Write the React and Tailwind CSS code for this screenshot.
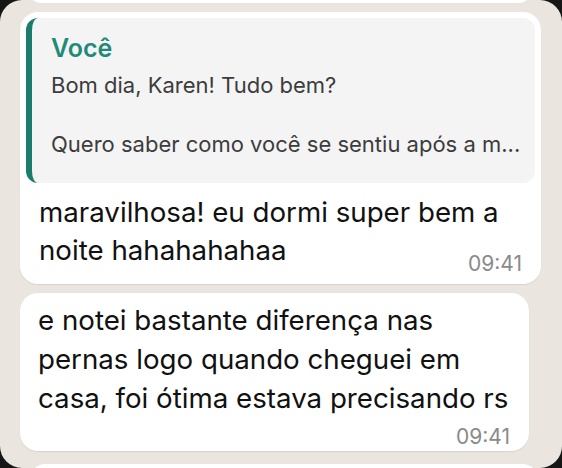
import React from "react";

export default function App() {
  const font = { fontFamily: "Inter, 'Liberation Sans', sans-serif" };
  return (
    <div className="w-[562px] h-[468px] bg-[#161616] overflow-hidden" style={font}>
      <div className="h-full w-full rounded-[22px] bg-[#ebe5df] flex flex-col overflow-hidden">
        {/* previous bubble stub */}
        <div className="-mt-[17px] h-[20px] ml-[30px] w-[500px] rounded-[18px] bg-white shrink-0" />

        {/* bubble 1 */}
        <div className="mt-[9px] ml-[20px] w-[521px] rounded-[18px] bg-white shadow-[0_1px_1px_rgba(0,0,0,0.08)] px-[6px] pt-[6px] pb-[8px] shrink-0">
          <div className="h-[165px] rounded-[12px] bg-[#f4f4f4] border-l-[6px] border-[#1c7c6c] pl-[19px] pt-[16px]">
            <div className="text-[25px] leading-[28px] font-semibold text-[#1f8a77]">Você</div>
            <div className="mt-[9px] text-[22px] leading-[29.5px] text-[#3c3c3c] whitespace-nowrap">
              <div>Bom dia, Karen! Tudo bem?</div>
              <div>&nbsp;</div>
              <div>Quero saber como você se sentiu após a m...</div>
            </div>
          </div>
          <div className="px-[13px]">
            <div className="mt-[10px] text-[27.7px] leading-[38px] text-[#111111] whitespace-nowrap">
              <div>maravilhosa! eu dormi super bem a</div>
              <div>noite hahahahahaa</div>
            </div>
            <div className="-mt-[17px] flex justify-end text-[21px] leading-[24px] text-[#8a8a8a]">09:41</div>
          </div>
        </div>

        {/* bubble 2 */}
        <div className="mt-[9px] ml-[20px] w-[509px] rounded-[18px] bg-white shadow-[0_1px_1px_rgba(0,0,0,0.08)] pl-[18px] pr-[19px] pt-[8px] pb-[2px] shrink-0">
          <div className="text-[27.7px] leading-[39px] text-[#111111] whitespace-nowrap">
            <div>e notei bastante diferença nas</div>
            <div>pernas logo quando cheguei em</div>
            <div>casa, foi ótima estava precisando rs</div>
          </div>
          <div className="mt-[7px] flex justify-end text-[21px] leading-[24px] text-[#8a8a8a]">09:41</div>
        </div>

        {/* bubble 3 stub */}
        <div className="mt-[13px] ml-[28px] w-[512px] h-[40px] rounded-[18px] bg-white shrink-0" />
      </div>
    </div>
  );
}
